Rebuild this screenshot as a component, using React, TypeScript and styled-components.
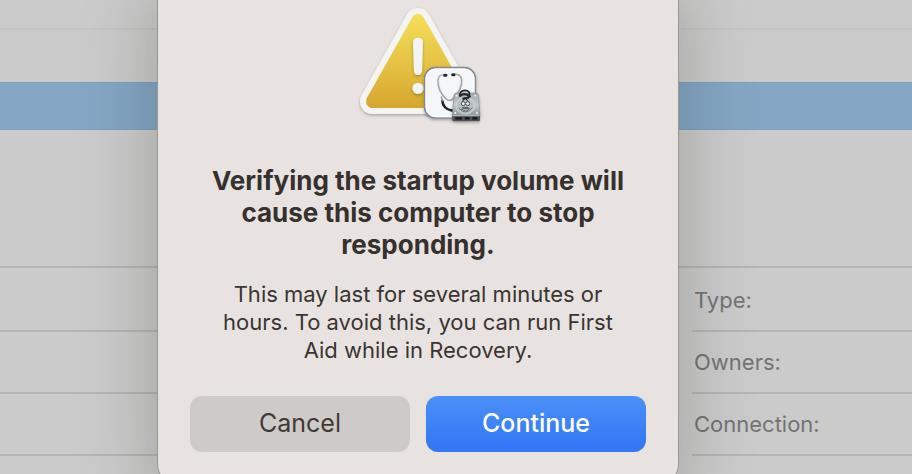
import React from "react";
import styled, { createGlobalStyle } from "styled-components";

const GlobalStyle = createGlobalStyle`
  *, *::before, *::after { box-sizing: border-box; }
  body {
    margin: 0;
    background: #cbcbcb;
    font-family: Inter, "Liberation Sans", sans-serif;
  }
`;

const Screen = styled.div`
  display: grid;
  grid-template: minmax(0, 1fr) / minmax(0, 1fr);
  height: 100vh;
  overflow: hidden;
`;

const Backdrop = styled.div`
  grid-area: 1 / 1;
  display: flex;
  flex-direction: column;
`;

const Toolbar = styled.div`
  flex: none;
  height: 30px;
  border-bottom: 2px solid #c4c4c4;
`;

const SelectedBand = styled.div`
  flex: none;
  height: 48px;
  margin: 52px 0 136px;
  background: #84a7c5;
  border-top: 1px solid #7fa1be;
  border-bottom: 1px solid #7fa1be;
`;

const Details = styled.div`
  flex: none;
  display: grid;
  grid-template-columns: minmax(0, 1fr) 220px;
  column-gap: 16px;
  border-top: 2px solid #b5b5b5;
`;

const Column = styled.dl`
  margin: 0;
`;

const DetailRow = styled.div<{ $first?: boolean }>`
  display: flex;
  align-items: center;
  height: ${(p) => (p.$first ? 64 : 62)}px;
  padding: ${(p) => (p.$first ? 2 : 0)}px 2px 0;
  border-bottom: 2px solid #b5b5b5;
`;

const Label = styled.dt`
  font-size: 22px;
  line-height: 28px;
  color: #747474;
`;

const SheetLayer = styled.div`
  grid-area: 1 / 1;
  z-index: 1;
  display: flex;
  justify-content: center;
  align-items: flex-start;
  padding-right: 76px;
`;

const Dialog = styled.section`
  flex: none;
  width: 520px;
  margin-top: -32px;
  padding: 32px;
  display: flex;
  flex-direction: column;
  align-items: center;
  text-align: center;
  background: #e8e3e0;
  border-radius: 20px;
  box-shadow: 0 0 0 1px #989795, 0 20px 76px rgba(20, 20, 12, 0.25);
`;

const AlertArt = styled.svg`
  display: block;
  width: 140px;
  height: 130px;
`;

const Title = styled.h1`
  margin: 35px 0 0;
  max-width: 440px;
  font-size: 26px;
  line-height: 32px;
  font-weight: 700;
  color: #36312e;
`;

const Message = styled.p`
  margin: 19px 0 0;
  max-width: 408px;
  font-size: 22px;
  line-height: 28px;
  color: #3a3532;
`;

const Actions = styled.div`
  align-self: stretch;
  display: grid;
  grid-template-columns: 1fr 1fr;
  gap: 16px;
  margin-top: 32px;
`;

const Button = styled.button<{ $primary?: boolean }>`
  height: 56px;
  padding: 0 0 2px;
  border: 0;
  border-radius: 12px;
  font: ${(p) => (p.$primary ? 500 : 400)} 25px/32px Inter, "Liberation Sans", sans-serif;
  color: ${(p) => (p.$primary ? "#ffffff" : "#3f3a37")};
  background: ${(p) =>
    p.$primary ? "linear-gradient(#4b91f8, #3478f6 85%)" : "#cecac7"};
`;

const WarningIcon = () => (
  <AlertArt viewBox="-6 -3 420 390" role="img" aria-label="Disk Utility warning">
    <defs>
      <linearGradient id="yellow" gradientUnits="userSpaceOnUse" x1="0" y1="38" x2="0" y2="322">
        <stop offset="0" stopColor="#f5df58" />
        <stop offset="0.5" stopColor="#e6c446" />
        <stop offset="1" stopColor="#d6a62d" />
      </linearGradient>
      <linearGradient id="metal" x1="0" y1="0" x2="0" y2="1">
        <stop offset="0" stopColor="#a3abb1" />
        <stop offset="0.5" stopColor="#c1c8cc" />
        <stop offset="1" stopColor="#8d969c" />
      </linearGradient>
      <filter id="soft" x="-20%" y="-20%" width="140%" height="140%">
        <feDropShadow dx="0" dy="4" stdDeviation="4" floodColor="#000" floodOpacity="0.3" />
      </filter>
    </defs>
    <path d="M204 59 L68 301 H340 Z" fill="#f4f4f3" stroke="#f4f4f3" strokeWidth="76" strokeLinejoin="round" filter="url(#soft)" />
    <path d="M204 59 L68 301 H340 Z" fill="url(#yellow)" stroke="url(#yellow)" strokeWidth="40" strokeLinejoin="round" />
    <g fill="#f3f4f4" filter="url(#soft)">
      <path d="M189 125 Q189 110 204 110 Q219 110 219 125 L216 211 Q215 222 204 222 Q193 222 192 211 Z" />
      <circle cx="204" cy="262" r="17" />
    </g>
    <rect x="224" y="200" width="152" height="151" rx="32" fill="#f5f6f7" stroke="#828c93" strokeWidth="5" filter="url(#soft)" />
    <rect x="228" y="204" width="144" height="143" rx="28" fill="none" stroke="#ffffff" strokeWidth="3" />
    <g fill="none" strokeLinecap="round">
      <path d="M285 223 Q267 218 264 237 C263 267 278 285 290 295 Q301 302 310 293 C325 279 337 256 335 235 Q331 217 312 221" stroke="#a4aaac" strokeWidth="5" />
      <path d="M285 222 Q269 219 267 237 C267 263 281 281 291 289 Q301 297 308 288 C322 273 332 252 331 235" stroke="#e3e6e7" strokeWidth="2" />
      <path d="M277 300 Q279 324 307 329" stroke="#202427" strokeWidth="8" />
      <path d="M277 300 L274 288" stroke="#929a9c" strokeWidth="4" />
      <path d="M284 223 H288 M308 221 H312" stroke="#26292b" strokeWidth="9" />
    </g>
    <g filter="url(#soft)">
      <path d="M319 276 H378 Q384 276 386 285 L390 346 H307 L312 285 Q313 276 319 276 Z" fill="url(#metal)" stroke="#828b91" strokeWidth="2" />
      <path d="M307 344 H390 V356 Q390 361 385 361 H312 Q307 361 307 356 Z" fill="#4b5255" />
      <path d="M316 352 H336 M344 352 H359 M367 352 H382" stroke="#17191b" strokeWidth="7" />
      <path d="M309 344 H388" stroke="#dce1e3" strokeWidth="2" />
    </g>
    <ellipse cx="346" cy="314" rx="28" ry="25" fill="#b9c0c4" stroke="#dde1e3" strokeWidth="2" />
    <path d="M326 321 Q346 345 367 320 M333 323 Q347 335 360 322" fill="none" stroke="#687175" strokeWidth="3" />
    <g fill="none" stroke="#242729" strokeWidth="5" strokeLinecap="round">
      <path d="M330 284 Q328 269 345 268 Q361 269 358 283" />
      <path d="M330 284 Q345 274 359 286 Q355 292 340 293" strokeWidth="7" />
      <path d="M344 291 L338 301 M346 291 L354 301" strokeWidth="3" />
    </g>
    <circle cx="340" cy="308" r="6" fill="#edf0f0" stroke="#44494c" strokeWidth="3" />
    <circle cx="353" cy="308" r="6" fill="#edf0f0" stroke="#44494c" strokeWidth="3" />
    <path d="M337 321 H356" stroke="#313638" strokeWidth="4" />
    <g fill="#eef0f1">
      <circle cx="320" cy="284" r="3" />
      <circle cx="376" cy="284" r="3" />
      <circle cx="316" cy="336" r="3" />
      <circle cx="381" cy="336" r="3" />
    </g>
  </AlertArt>
);

const labels = ["Type:", "Owners:", "Connection:"];

export default function App() {
  return (
    <>
      <GlobalStyle />
      <Screen>
        <Backdrop>
          <Toolbar />
          <SelectedBand />
          <Details>
            <Column>
              {labels.map((label, i) => (
                <DetailRow key={label} $first={i === 0} />
              ))}
            </Column>
            <Column>
              {labels.map((label, i) => (
                <DetailRow key={label} $first={i === 0}>
                  <Label>{label}</Label>
                </DetailRow>
              ))}
            </Column>
          </Details>
        </Backdrop>
        <SheetLayer>
          <Dialog role="alertdialog" aria-labelledby="alert-title" aria-describedby="alert-message">
            <WarningIcon />
            <Title id="alert-title">
              Verifying the startup volume will cause this computer to stop responding.
            </Title>
            <Message id="alert-message">
              This may last for several minutes or hours. To avoid this, you can run First Aid while in Recovery.
            </Message>
            <Actions>
              <Button type="button">Cancel</Button>
              <Button type="button" $primary>Continue</Button>
            </Actions>
          </Dialog>
        </SheetLayer>
      </Screen>
    </>
  );
}
